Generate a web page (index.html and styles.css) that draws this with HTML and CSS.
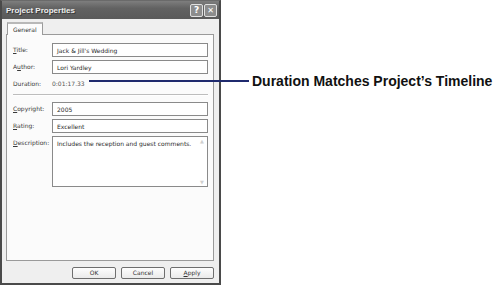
FILE: index.html
```html
<!DOCTYPE html>
<html>
<head>
<meta charset="utf-8">
<link rel="stylesheet" href="styles.css">
</head>
<body>
<div class="page">
  <div class="dialog">
    <div class="titlebar">
      <span class="title">Project Properties</span>
      <div class="tbtns">
        <span class="tbtn">?</span>
        <span class="tbtn x">✕</span>
      </div>
    </div>
    <div class="body">
      <div class="tabs"><span class="tab">General</span></div>
      <div class="panel">
        <div class="row"><label><u>T</u>itle:</label><div class="field">Jack &amp; Jill's Wedding</div></div>
        <div class="row"><label>A<u>u</u>thor:</label><div class="field">Lori Yardley</div></div>
        <div class="row plain"><label>Duration:</label><div class="value">0:01:17.33</div></div>
        <div class="sep"></div>
        <div class="row"><label><u>C</u>opyright:</label><div class="field">2005</div></div>
        <div class="row"><label><u>R</u>ating:</label><div class="field">Excellent</div></div>
        <div class="row desc"><label><u>D</u>escription:</label><div class="field area">Includes the reception and guest comments.<span class="sb"><span>▲</span><span>▼</span></span></div></div>
      </div>
      <div class="buttons">
        <span class="btn">OK</span>
        <span class="btn">Cancel</span>
        <span class="btn"><u>A</u>pply</span>
      </div>
    </div>
  </div>
  <div class="callout">
    <span class="line"></span>
    <span class="ctext">Duration Matches Project’s Timeline</span>
  </div>
</div>
</body>
</html>
```

FILE: styles.css
```css
html, body {
  margin: 0;
  padding: 0;
  background: #fff;
}
.page {
  position: relative;
  width: 500px;
  height: 286px;
  font-family: "DejaVu Sans", sans-serif;
}
.dialog {
  width: 217px;
  height: 282px;
  border: 2px solid #4a4a4a;
  border-top: 1px solid #6a6a6a;
  background: #efefef;
  display: flex;
  flex-direction: column;
}
.titlebar {
  height: 18px;
  background: linear-gradient(#7e7e7e, #626262 40%, #5a5a5a);
  display: flex;
  align-items: center;
  justify-content: space-between;
  padding: 0 2px 0 4px;
}
.title {
  color: #ececec;
  font-size: 8px;
  font-weight: bold;
  font-family: "Liberation Sans", Arial, sans-serif;
  text-shadow: 1px 1px 0 #3a3a3a;
}
.tbtns {
  display: flex;
  gap: 1px;
}
.tbtn {
  width: 11px;
  height: 11px;
  border: 1px solid #e0e0e0;
  border-radius: 2px;
  background: #8c8c8c;
  color: #fff;
  font-size: 9px;
  font-weight: bold;
  line-height: 11px;
  text-align: center;
}
.tbtn.x { font-size: 8px; }
.body {
  flex: 1;
  padding: 3px 5px 4px 4px;
  display: flex;
  flex-direction: column;
}
.tabs {
  display: flex;
  padding-left: 1px;
  height: 12px;
}
.tab {
  font-size: 6px;
  color: #333;
  background: #fcfcfc;
  border: 1px solid #9a9a9a;
  border-bottom: none;
  border-top: 2px solid #b8b8b8;
  padding: 2px 5px 0;
  position: relative;
  z-index: 1;
  box-sizing: border-box;
  margin-bottom: -1px;
  height: 13px;
}
.panel {
  height: 227px;
  box-sizing: border-box;
  border: 1px solid #9a9a9a;
  background: #fbfbfb;
  padding: 8px 5px 0 6px;
  display: flex;
  flex-direction: column;
  gap: 3px;
}
.row {
  display: flex;
  align-items: flex-start;
  font-size: 6px;
  color: #3a3a3a;
}
.row label {
  width: 39px;
  flex: none;
  padding-top: 3px;
}
.field {
  flex: 1;
  height: 14px;
  box-sizing: border-box;
  border: 1px solid #8a8a8a;
  background: #fff;
  padding: 3px 4px 0;
  color: #2a2a2a;
}
.row.plain { height: 13px; }
.row.plain label, .row.plain .value { padding-top: 3px; }
.row.plain .value { color: #555; }
.sep {
  height: 0;
  border-top: 1px solid #bdbdbd;
  border-bottom: 1px solid #fff;
  margin: 1px 0 3px;
}
.area {
  height: 51px;
  position: relative;
  padding-right: 12px;
}
.sb {
  position: absolute;
  right: 1px;
  top: 1px;
  bottom: 1px;
  width: 8px;
  display: flex;
  flex-direction: column;
  justify-content: space-between;
  color: #cfcfcf;
  font-size: 5px;
  text-align: center;
}
.buttons {
  display: flex;
  justify-content: flex-end;
  gap: 5px;
  padding: 6px 0 0;
}
.btn {
  width: 44px;
  height: 12px;
  box-sizing: border-box;
  border: 1px solid #6e6e6e;
  border-radius: 2px;
  background: linear-gradient(#fdfdfd, #eaeaea);
  font-size: 6px;
  color: #333;
  text-align: center;
  line-height: 10px;
}
.callout {
  position: absolute;
  left: 89px;
  top: 73px;
  display: flex;
  align-items: center;
  gap: 3px;
}
.line {
  width: 160px;
  height: 2px;
  background: #1f2a6e;
}
.ctext {
  font-family: "Liberation Sans", Arial, sans-serif;
  font-weight: bold;
  font-size: 14px;
  color: #111;
}
```
